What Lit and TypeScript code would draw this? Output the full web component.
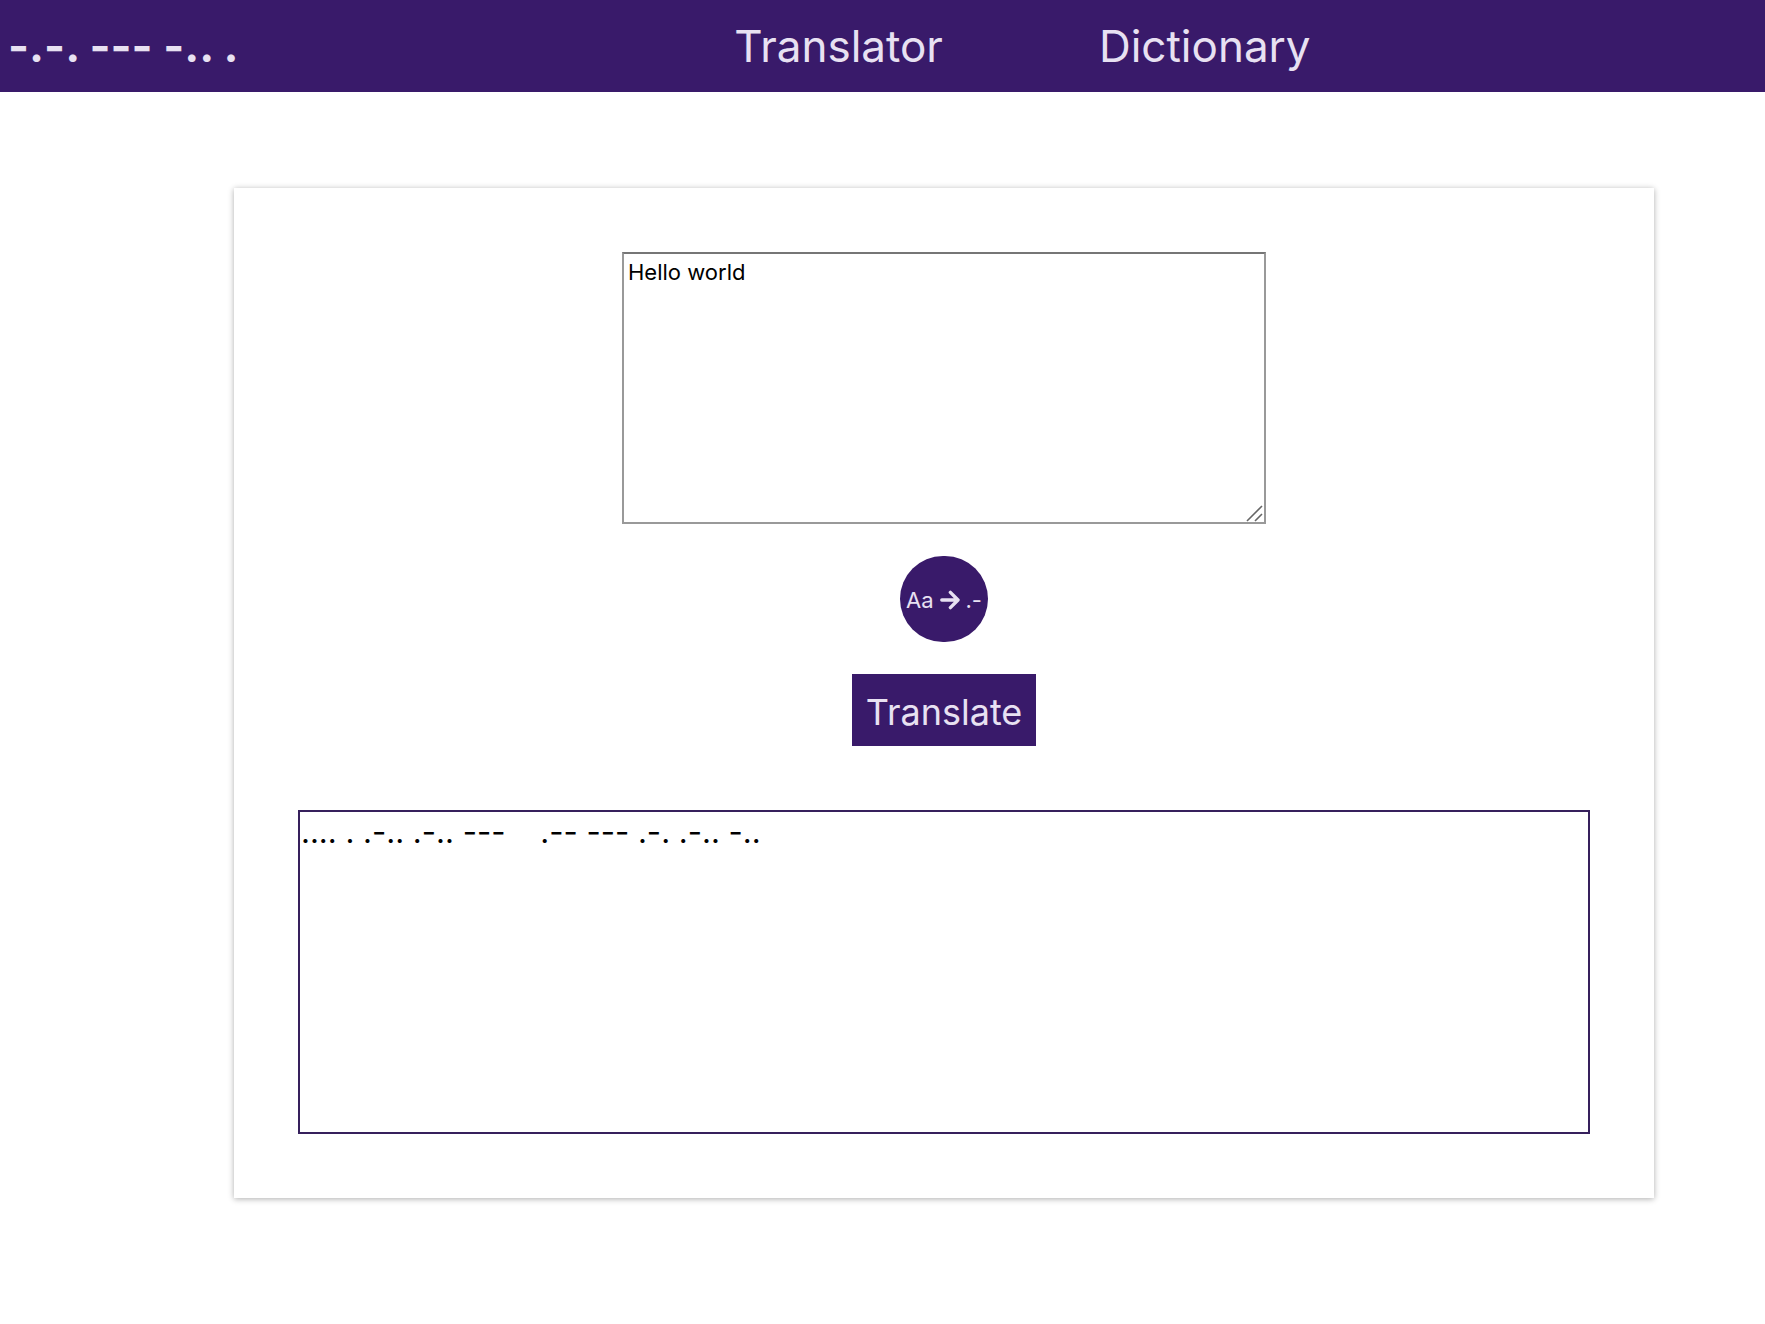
import { LitElement, html, css } from "lit";
import { customElement, state } from "lit/decorators.js";

const MORSE: Record<string, string> = {
  a: ".-", b: "-...", c: "-.-.", d: "-..", e: ".", f: "..-.", g: "--.",
  h: "....", i: "..", j: ".---", k: "-.-", l: ".-..", m: "--", n: "-.",
  o: "---", p: ".--.", q: "--.-", r: ".-.", s: "...", t: "-", u: "..-",
  v: "...-", w: ".--", x: "-..-", y: "-.--", z: "--..",
};

const encode = (text: string) =>
  text
    .toLowerCase()
    .split(/\s+/)
    .map((word) => [...word].map((c) => MORSE[c] ?? c).join(" "))
    .join("    ");

@customElement("app-root")
export class AppRoot extends LitElement {
  static styles = css`
    :host {
      display: block;
      font-family: Inter, "Liberation Sans", sans-serif;
      font-feature-settings: "calt" 0;
      color: #000;
      --brand: #391a6a;
      --pale: #e8e1f2;
    }
    .bar {
      display: grid;
      grid-template-columns: 41.6% 1fr;
      align-items: center;
      height: 92px;
      background: var(--brand);
    }
    .logo {
      margin: 0;
      padding-left: 8px;
      font-size: 45px;
      line-height: 56px;
      font-weight: 700;
    }
    .logo a,
    .link {
      color: var(--pale);
      text-decoration: none;
    }
    .nav {
      display: flex;
      gap: 156px;
    }
    .link {
      font-size: 44px;
      line-height: 56px;
    }
    .main {
      padding: 96px 111px 96px 234px;
    }
    .card {
      display: flex;
      flex-direction: column;
      align-items: center;
      gap: 32px;
      padding: 64px;
      box-shadow: 0 1px 6px rgba(0, 0, 0, 0.32);
    }
    .field {
      position: relative;
      width: calc(50% - 2px);
    }
    .source {
      box-sizing: border-box;
      display: block;
      width: 100%;
      height: 272px;
      margin: 0;
      padding: 2px 4px;
      border: 2px solid #999;
      border-top-color: #767676;
      border-radius: 0;
      background: #fff;
      color: #000;
      font: 22px/32px Inter, "Liberation Sans", sans-serif;
      outline: none;
      resize: vertical;
    }
    .source::-webkit-resizer {
      display: none;
    }
    .grip {
      position: absolute;
      right: 2px;
      bottom: 2px;
      width: 18px;
      height: 18px;
      pointer-events: none;
    }
    .swap {
      display: flex;
      align-items: center;
      justify-content: center;
      gap: 6px;
      width: 88px;
      height: 86px;
      padding: 2px 0 0;
      border: 0;
      border-radius: 43px;
      background: var(--brand);
      color: var(--pale);
      font: 22px/32px Inter, "Liberation Sans", sans-serif;
    }
    .arrow {
      width: 20px;
      height: 20px;
    }
    .go {
      height: 72px;
      padding: 4px 14px 0;
      border: 0;
      background: var(--brand);
      color: var(--pale);
      font: 36px/56px Inter, "Liberation Sans", sans-serif;
    }
    .result {
      box-sizing: border-box;
      display: block;
      align-self: stretch;
      min-height: 324px;
      margin-top: 32px;
      padding: 0 1px;
      border: 2px solid #36205c;
      font-size: 31px;
      line-height: 40px;
      white-space: pre-wrap;
    }
  `;

  @state() private text = "Hello world";
  @state() private output = encode("Hello world");

  private onInput(e: Event) {
    this.text = (e.target as HTMLTextAreaElement).value;
  }

  private translate() {
    this.output = encode(this.text);
  }

  render() {
    return html`
      <header class="bar">
        <h1 class="logo"><a href="#">-.-. --- -.. .</a></h1>
        <nav class="nav">
          <a class="link" href="#translator">Translator</a>
          <a class="link" href="#dictionary">Dictionary</a>
        </nav>
      </header>
      <main class="main">
        <section class="card">
          <div class="field">
            <textarea
              class="source"
              aria-label="Text to translate"
              spellcheck="false"
              .value=${this.text}
              @input=${this.onInput}
            ></textarea>
            <svg class="grip" viewBox="0 0 18 18" fill="none" stroke="#666" stroke-width="1.6" aria-hidden="true">
              <path d="M1 17L16 2M9 17L16 10" />
            </svg>
          </div>
          <button class="swap" type="button">
            <span>Aa</span>
            <svg class="arrow" viewBox="0 0 20 20" fill="none" stroke="currentColor" stroke-width="3.4" stroke-linecap="round" stroke-linejoin="round" aria-hidden="true">
              <path d="M1.8 10H17.4M10.4 2.4L18 10L10.4 17.6" />
            </svg>
            <span>.-</span>
          </button>
          <button class="go" type="button" @click=${this.translate}>Translate</button>
          <output class="result">${this.output}</output>
        </section>
      </main>
    `;
  }
}
